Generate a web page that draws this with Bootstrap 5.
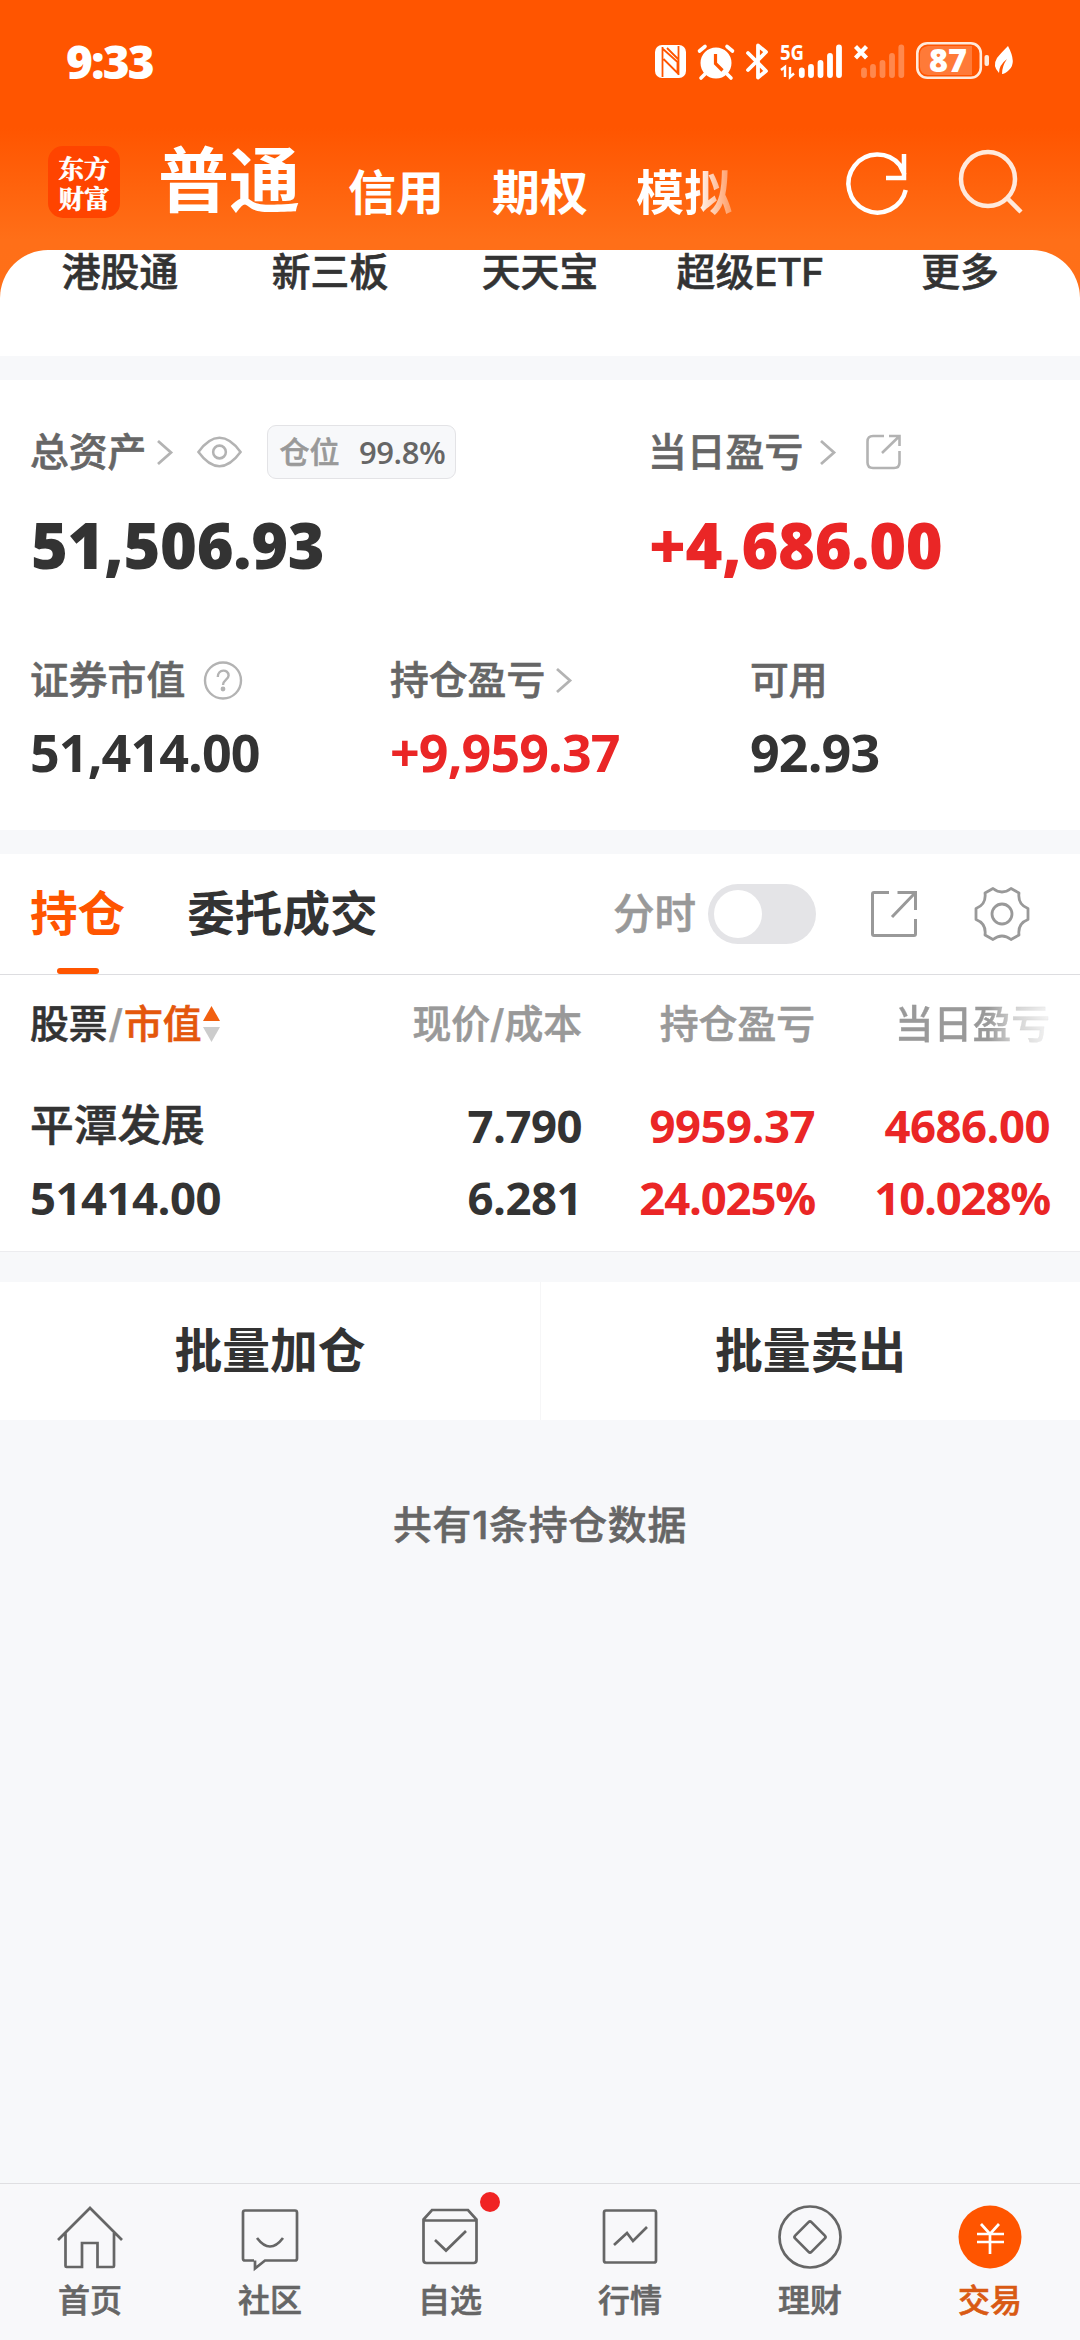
<!DOCTYPE html>
<html lang="zh-CN">
<head>
<meta charset="utf-8">
<meta name="viewport" content="width=device-width, initial-scale=1">
<title>交易</title>
<link rel="stylesheet" href="https://cdn.jsdelivr.net/npm/bootstrap@5.3.0/dist/css/bootstrap.min.css">
<style>
:root { --ink:#333; --sub:#666; --mute:#999; --line:#dddde0; --page:#f7f8fa; --brand:#ff5500; --up:#ea2626; }
body { width:1080px; background:var(--page); color:var(--ink); font-family:Inter,"Noto Sans CJK SC",sans-serif; font-size:38.8px; line-height:40px; font-weight:500; -webkit-text-stroke:.6px; overflow-x:hidden; }
svg { display:block; flex:none; overflow:visible; fill:none; -webkit-text-stroke:0; }
.app { min-height:2340px; }
.top-zone { height:356px; background:linear-gradient(#ff5500 0,#ff5500 128px,#ff6f18 240px,#ff7018 100%); color:#fff; }
.status { height:122px; padding:0 66px 0 66px; }
.clock, .big-num, .mid-num, .num-row, .pos-tag b { font-family:"Open Sans","Noto Sans CJK SC",sans-serif; -webkit-text-stroke:0; }
.clock { font-size:46px; font-weight:800; letter-spacing:-1.8px; }
.head { height:128px; padding-left:48px; }
.logo { width:72px; height:72px; margin-top:24px; border-radius:15px; background:#ff4400; font-family:"Noto Serif CJK SC","Noto Sans CJK SC",serif; font-size:25.5px; line-height:30px; font-weight:700; padding-top:6px; }
.acct-main { font-size:71px; line-height:72px; font-weight:700; margin:22px 0 0 38px; -webkit-text-stroke:0; }
.acct { font-size:48px; line-height:48px; font-weight:600; margin-top:47px; -webkit-text-stroke:0; }
.fade-end { background:linear-gradient(90deg,#fff 62%,rgba(255,255,255,.35)); -webkit-background-clip:text; background-clip:text; color:transparent; }
.sheet { flex:1; border-radius:48px 48px 0 0; padding:2px 15px 0; color:var(--ink); }
.sheet > div { width:210px; }
.assets { margin-top:24px; height:450px; padding:45px 30px 0; color:var(--sub); }
.top-row { height:54px; }
.pos-tag { width:189px; height:54px; border:1px solid #e3e3e6; border-radius:9px; background:var(--page); font-size:30px; color:var(--mute); margin-left:25px; padding:0 10px 0 11px; }
.pos-tag b { font-weight:600; color:var(--sub); font-size:31px; letter-spacing:-.4px; }
.big-num { font-size:63px; line-height:62px; font-weight:800; letter-spacing:-.3px; margin-top:35px; padding-left:1px; }
.mid-num { font-size:52px; line-height:52px; font-weight:700; letter-spacing:-.9px; }
.ink { color:var(--ink); } .up { color:var(--up); }
.c-left { flex:none; width:618px; } .c-third { flex:none; width:360px; }
.pos-panel { margin-top:24px; height:398px; border-bottom:1px solid #ececef; }
.tab-row { height:121px; border-bottom:1px solid var(--line); padding-left:30px; }
.tab-item { font-size:47.6px; height:120px; line-height:120px; font-weight:600; -webkit-text-stroke:0; }
.tab-item.on { color:var(--brand); position:relative; }
.tab-item.on::after { content:""; position:absolute; left:27px; bottom:0; width:42px; height:6px; border-radius:3px; background:var(--brand); }
.tgl { width:108px; height:60px; border-radius:30px; background:#e4e4e7; padding:6px; }
.tgl i { display:block; width:48px; height:48px; border-radius:50%; background:#fff; }
.list-row { padding:0 30px; }
.list-row > :nth-child(1) { width:340px; }
.list-row > :nth-child(2) { width:212px; text-align:right; }
.list-row > :nth-child(3) { width:233px; text-align:right; }
.list-row > :nth-child(4) { width:235px; text-align:right; }
.th-row { height:98px; color:var(--mute); }
.fade-head { background:linear-gradient(90deg,var(--mute) 60%,#d0d0d0 76%,#f4f4f4 100%); -webkit-background-clip:text; background-clip:text; color:transparent; -webkit-text-stroke:.3px #9993; }
.num-row { font-size:45.5px; font-weight:700; letter-spacing:-.5px; height:72px; }
.pct { letter-spacing:-1.2px; }
.stock-name { font-family:Inter,"Noto Sans CJK SC",sans-serif; font-size:43.7px; letter-spacing:0; font-weight:500; -webkit-text-stroke:.6px; padding-top:2px; }
.batch { margin-top:30px; height:138px; line-height:138px; font-size:47.8px; font-weight:600; -webkit-text-stroke:0; }
.batch > div + div { border-left:1px solid #f6f6f7; }
.tabbar { height:157px; border-top:1px solid #dfdfe2; background:#f8f8fa; color:var(--sub); font-size:32px; line-height:34px; }
.tabbar > div { width:180px; padding-top:16px; position:relative; }
.tabbar svg { width:72px; height:72px; margin-bottom:12px; stroke:#666; stroke-width:2.7; }
.dot { position:absolute; left:120px; top:8px; width:20px; height:20px; border-radius:50%; background:#f02323; }
</style>
</head>
<body>
<div class="app d-flex flex-column">
  <header class="top-zone d-flex flex-column">
    <div class="status d-flex align-items-center justify-content-between">
      <div class="clock">9:33</div>
      <svg width="360" height="42" viewBox="654 40 360 42" fill="#fff">
        <rect x="655" y="45" width="31" height="33" rx="7" fill="#fff"/>
        <path d="M662.500 47v30M678.500 46v29M663 49l14.500 13v11l-14-14M667 48l12 12" stroke="#ff5500" stroke-width="1.800"/>
        <g stroke="#fff" stroke-linecap="round"><circle cx="716" cy="63" r="14.500" fill="#fff" stroke-width="2"/><path d="M699.500 51l5.500-4.500M732.500 51l-5.500-4.500M705 74l-4 4M727 74l4 4" stroke-width="3.600"/></g>
        <path d="M715.500 54v9.500l7 7" stroke="#ff5500" stroke-width="3.200"/>
        <path d="M748 53l18 18-8 6.500v-32l8 6.500-18 18" stroke="#fff" stroke-width="3.800" stroke-linejoin="round" stroke-linecap="round"/>
        <text x="780" y="60" font-size="22" font-weight="700" font-family="Open Sans" textLength="24" lengthAdjust="spacingAndGlyphs" fill="#fff">5G</text>
        <path d="M781 70l4-3v10M790 67v10l4-3.500" stroke="#fff" stroke-width="2.400"/>
        <g stroke="#fff" stroke-width="5.800" stroke-linecap="round"><path d="M801.800 70.500v4.500M811 67v8M820.500 63v12M830 56v19M839 47.500v27.500"/><path opacity=".3" d="M864 70.500v4.500M873 67v8M882.500 63v12M892 56v19M901.300 47.500v27.500"/></g>
        <path d="M855.500 46.500l11 11.500M866.500 46.500l-11 11.500" stroke="#fff" stroke-width="4.200"/>
        <rect x="917.300" y="43.300" width="63.500" height="34.500" rx="10" stroke="#ffeadb" stroke-width="2.600"/>
        <path d="M928 46h44v29h-44q-8-1-8-8v-13q0-7 8-8z" fill="#ff7a38"/>
        <text x="929" y="72" font-size="31" font-weight="800" font-family="Open Sans" textLength="38" lengthAdjust="spacingAndGlyphs" fill="#fff">87</text>
        <rect x="984.500" y="55" width="4.500" height="11" rx="2" fill="#ffeadb"/>
        <path d="M1008 46q9 17 1 24-4 4-7 4 0-8 5-15-8 6-8 14-7-7-2-15 4-5 11-12z" fill="#fff"/>
      </svg>
    </div>
    <nav class="head d-flex align-items-start">
      <div class="logo text-center">东方<br>财富</div>
      <div class="acct-main">普通</div>
      <div class="acct" style="margin-left:48px">信用</div>
      <div class="acct" style="margin-left:48px">期权</div>
      <div class="acct fade-end" style="margin-left:48px">模拟</div>
      <svg class="ms-auto" width="64" height="64" viewBox="844 151 64 64" style="margin:29px 48px 0 0" stroke="#fff" stroke-width="4.500"><path d="M904.700 190a29 29 0 1 1-6-25l5 10M903 154v24h-18"/></svg>
      <svg width="66" height="66" viewBox="956 149 66 66" style="margin:27px 57px 0 0" stroke="#ffe9dc" stroke-width="4.500"><circle cx="987" cy="179" r="27"/><path d="M1006 198l14 14"/></svg>
    </nav>
    <div class="sheet bg-white d-flex text-center">
      <div>港股通</div><div>新三板</div><div>天天宝</div><div>超级<span style="letter-spacing:-.8px">ETF</span></div><div>更多</div>
    </div>
  </header>

  <section class="assets bg-white">
    <div class="d-flex">
      <div class="c-left">
        <div class="top-row d-flex align-items-center">
          <span>总资产</span>
          <svg style="margin:0 20px 0 7px" width="24" height="28" viewBox="0 0 24 28" stroke="#b3b3b3" stroke-width="2.800"><path d="M5 3l13 11.500L5 26"/></svg>
          <svg width="45" height="32" viewBox="0 0 46 32" stroke="#b3b3b3" stroke-width="2.600"><path d="M1.500 16Q12 1.500 23 1.500T44.500 16Q34 30.500 23 30.500T1.500 16z"/><circle cx="23" cy="16" r="6.500"/></svg>
          <div class="pos-tag d-flex align-items-center justify-content-between"><span>仓位</span><b>99.8%</b></div>
        </div>
        <div class="big-num ink">51,506.93</div>
      </div>
      <div>
        <div class="top-row d-flex align-items-center">
          <span>当日盈亏</span>
          <svg style="margin:0 25px 0 13px" width="24" height="28" viewBox="0 0 24 28" stroke="#b3b3b3" stroke-width="2.800"><path d="M5 3l13 11.500L5 26"/></svg>
          <svg width="36" height="36" viewBox="0 0 36 36" stroke="#b3b3b3" stroke-width="2.600"><path d="M19 2H8Q2.500 2 2.500 7.500v21q0 5.500 5.500 5.500h21q5.500 0 5.500-5.500V17M24 2h10.500v10M34 2.500L17 19"/></svg>
        </div>
        <div class="big-num up">+4,686.00</div>
      </div>
    </div>
    <div class="d-flex" style="margin-top:84px">
      <div class="c-third">
        <div class="d-flex align-items-center">证券市值
          <svg style="margin-left:18px" width="40" height="40" viewBox="0 0 40 40" stroke="#b3b3b3" stroke-width="2.400"><circle cx="20" cy="20.500" r="18"/><path d="M14.800 17c0-8.500 10.800-8 10.800-1.500 0 4-5.600 4.500-5.600 9.500"/><circle cx="20" cy="29" r="1.200" fill="#b3b3b3"/></svg>
        </div>
      </div>
      <div class="c-third d-flex align-items-center">持仓盈亏
        <svg style="margin-left:7px" width="24" height="28" viewBox="0 0 24 28" stroke="#b3b3b3" stroke-width="2.800"><path d="M5 3l13 11.500L5 26"/></svg>
      </div>
      <div class="c-third">可用</div>
    </div>
    <div class="d-flex mid-num ink" style="margin-top:26px">
      <div class="c-third">51,414.00</div><div class="c-third up">+9,959.37</div><div class="c-third">92.93</div>
    </div>
  </section>

  <section class="pos-panel bg-white">
    <div class="tab-row d-flex align-items-center">
      <div class="tab-item on">持仓</div>
      <div class="tab-item" style="margin-left:62px">委托成交</div>
      <div class="ms-auto" style="font-size:41.5px;color:#999;margin-right:12px">分时</div>
      <div class="tgl"><i></i></div>
      <svg style="margin-left:53px" width="50" height="50" viewBox="0 0 50 50" stroke="#999" stroke-width="3"><path d="M20 3.500H5q-1.500 0-1.500 1.500v40q0 1.500 1.500 1.500h40q1.500 0 1.500-1.500V30M28.500 3.500h18V21M46 4L23 28"/></svg>
      <svg style="margin:0 49px 0 54px" width="58" height="58" viewBox="-29 -29 58 58" stroke="#999" stroke-width="2.800" stroke-linejoin="round"><path d="M-9-25.500Q0-18.500 9-25.500L17-21Q15.500-9.500 26-5.500V5.500Q15.500 9.500 17 21L9 25.500Q0 18.500-9 25.500L-17 21Q-15.500 9.500-26 5.500V-5.500Q-15.500-9.500-17-21z"/><circle r="10"/></svg>
    </div>
    <div class="list-row th-row d-flex align-items-center">
      <div class="d-flex align-items-center"><span class="ink">股票</span><span style="padding:0 1px">/</span><span style="color:#e4570c">市值</span>
        <svg style="margin-left:1px" width="17" height="36" viewBox="0 0 17 36"><path d="M8.500 0l8.500 15H0z" fill="#f2600f"/><path d="M8.500 36l8.500-15H0z" fill="#ccc"/></svg></div>
      <div>现价/成本</div><div>持仓盈亏</div><div><span class="fade-head">当日盈亏</span></div>
    </div>
    <div class="list-row num-row d-flex align-items-center" style="margin-top:16px">
      <div class="stock-name">平潭发展</div><div>7.790</div><div class="up">9959.37</div><div class="up">4686.00</div>
    </div>
    <div class="list-row num-row d-flex align-items-center">
      <div>51414.00</div><div>6.281</div><div class="up pct">24.025%</div><div class="up pct">10.028%</div>
    </div>
  </section>

  <section class="batch bg-white d-flex text-center">
    <div class="w-50">批量加仓</div><div class="w-50">批量卖出</div>
  </section>
  <div class="text-center" style="margin-top:85px;color:#666;letter-spacing:.8px">共有1条持仓数据</div>

  <footer class="tabbar mt-auto d-flex text-center">
    <div class="d-flex flex-column align-items-center"><svg viewBox="0 0 72 72"><path d="M4 40L36 8l32 32M11.500 33v33q0 1 1 1H28V43h15.500v24H59q1 0 1-1V33"/></svg>首页</div>
    <div class="d-flex flex-column align-items-center"><svg viewBox="0 0 72 72"><path d="M20 60.500h-9q-2 0-2-2v-46q0-2 2-2h50q2 0 2 2v46q0 2-2 2H31L21 68.500v-8M23 38q13 17 26 0"/></svg>社区</div>
    <div class="d-flex flex-column align-items-center"><svg viewBox="0 0 72 72"><path d="M9.500 19.500L18 10h36l8.500 9.500V60q0 3-3 3h-47q-3 0-3-3zM9.500 20.500h53M21 40l11 10.500L52 31"/></svg>自选<span class="dot"></span></div>
    <div class="d-flex flex-column align-items-center"><svg viewBox="0 0 72 72"><rect x="10" y="10.500" width="52" height="52" rx="2"/><path d="M20 45l13-12 6 8 14-14"/></svg>行情</div>
    <div class="d-flex flex-column align-items-center"><svg viewBox="0 0 72 72"><circle cx="36" cy="37" r="30.500"/><rect x="24.500" y="25.500" width="23" height="23" rx="2" transform="rotate(45 36 37)"/></svg>理财</div>
    <div class="d-flex flex-column align-items-center" style="color:#d95a14"><svg viewBox="0 0 72 72"><circle cx="36" cy="37" r="31.500" fill="#ff5500" stroke="none"/><path d="M27 24l9 10 9-10M23 34h27M23 42h27M36 34v20" stroke="#fff"/></svg>交易</div>
  </footer>
</div>
<script src="https://cdn.jsdelivr.net/npm/bootstrap@5.3.0/dist/js/bootstrap.bundle.min.js"></script>
</body>
</html>
